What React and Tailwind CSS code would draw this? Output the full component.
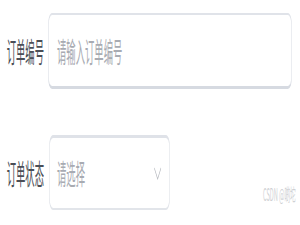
import React from "react";

export default function App() {
  return (
    <div className="w-[300px] h-[225px] overflow-hidden bg-white">
      <div
        className="relative w-[900px] h-[225px] origin-top-left scale-x-[0.3333] text-[28px] leading-none"
        style={{ fontFamily: '"Noto Sans CJK SC", "Noto Sans", sans-serif' }}
      >
        <div className="pt-[13px] pl-[20px] flex flex-col gap-[46px]">
          <div className="flex items-center gap-[12px]">
            <label className="w-[112px] text-[#4a4e56] whitespace-nowrap">订单编号</label>
            <div className="w-[732px] h-[76px] flex items-center px-[25px] rounded-[12px] border-2 border-[#e0e3e9] border-b-[3px] border-b-[#d6dae1]">
              <span className="text-[#a8abb2]">请输入订单编号</span>
            </div>
          </div>

          <div className="flex items-center gap-[15px]">
            <label className="w-[112px] text-[#4a4e56] whitespace-nowrap">订单状态</label>
            <div className="w-[363px] h-[75px] flex items-center justify-between pl-[22px] pr-[24px] rounded-[12px] border-2 border-[#e2e5ea] border-t-[3px] border-t-[#dfe2e8]">
              <span className="text-[#a8abb2]">请选择</span>
              <svg width="22" height="13" viewBox="0 0 22 13" fill="none">
                <path d="M1 1 L11 12 L21 1" stroke="#b4b7bd" strokeWidth="1.5" />
              </svg>
            </div>
          </div>
        </div>

        <span className="absolute left-[789px] top-[185px] text-[17px] text-[#cfd1d4] whitespace-nowrap">
          CSDN @啲坨
        </span>
      </div>
    </div>
  );
}
